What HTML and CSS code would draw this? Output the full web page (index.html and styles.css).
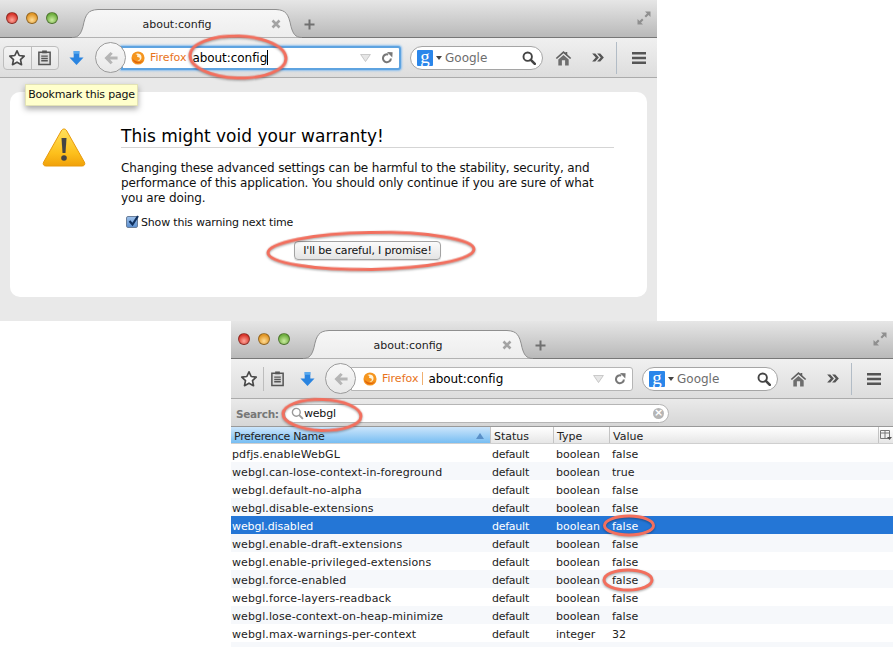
FILE: index.html
```html
<!DOCTYPE html>
<html lang="en">
<head>
<meta charset="utf-8">
<title>about:config</title>
<link rel="stylesheet" href="styles.css">
</head>
<body>
<svg class="defs" width="0" height="0" aria-hidden="true">
  <defs>
    <linearGradient id="tabfill" x1="0" y1="0" x2="0" y2="1"><stop offset="0" stop-color="#f7f7f7"/><stop offset="1" stop-color="#ededed"/></linearGradient>
    <linearGradient id="warn" x1="0" y1="0" x2="0" y2="1"><stop offset="0" stop-color="#ffe15c"/><stop offset=".65" stop-color="#fdc01c"/><stop offset="1" stop-color="#f0a10a"/></linearGradient>
    <symbol id="i-star" viewBox="0 0 18 18"><path d="M9 1.800l2.200 4.700 5 .6-3.700 3.500 1 5.100L9 13.200l-4.500 2.500 1-5.100L1.800 7.100l5-.6z" fill="#f6f6f6" stroke="#4a4a4a" stroke-width="1.700" stroke-linejoin="round"/></symbol>
    <symbol id="i-list" viewBox="0 0 16 18"><path d="M2 3.500h12v13H2z" fill="#dcdcdc" stroke="#555" stroke-width="1.600"/><path d="M5.500 1.500h5v3h-5z" fill="#555"/><path d="M4.500 7.500h7M4.500 10h7M4.500 12.500h7" stroke="#555" stroke-width="1.500"/></symbol>
    <symbol id="i-down" viewBox="0 0 16 17"><path d="M5 1h6v7h4.500L8 16 .5 8H5z" fill="#2a84e0"/><path d="M5 1h6v3H5z" fill="#59a9ee"/></symbol>
    <symbol id="i-back" viewBox="0 0 18 16"><path d="M8.500 1L1.500 8l7 7 2.500-2-3-3.200h8.500V6.200H8L11 3z" fill="#b5b5b5"/></symbol>
    <symbol id="i-fox" viewBox="0 0 16 16"><circle cx="8" cy="8" r="7.500" fill="#f5951e"/><path d="M5 3.500c3-1.500 6.500-.2 7 3 .5 3.500-2.500 5.500-5 4.700 2 0 3.500-1.500 3-3.200-.3-1-2.500-.8-3.200-1.500 1-1.400.5-2.500-1.800-3z" fill="#fff3d8"/><path d="M1.500 8c.3 3.500 3 6 6.500 6 3 0 5-1.500 6-3.500-2 2-5.500 2.500-8 1.300C3.500 10.500 2 9.500 1.500 8z" fill="#e0640c"/></symbol>
    <symbol id="i-drop" viewBox="0 0 12 9"><path d="M.5 .5h11L6 8.500z" fill="#e6e6e6" stroke="#c2c2c2"/></symbol>
    <symbol id="i-reload" viewBox="0 0 14 14"><path d="M11.500 7.500A4.600 4.600 0 1 1 8.500 3" fill="none" stroke="#777" stroke-width="2.400"/><path d="M7 0l6.500 .3-.3 6.200z" fill="#777"/></symbol>
    <symbol id="i-mag" viewBox="0 0 14 14"><circle cx="5.700" cy="5.700" r="4.200" fill="none" stroke="#444" stroke-width="1.900"/><path d="M8.800 8.800l4 4" stroke="#444" stroke-width="2.600" stroke-linecap="round"/></symbol>
    <symbol id="i-home" viewBox="0 0 18 17"><path d="M9 1L.8 8.500l1.200 1L9 3.500l7 6 1.200-1z" fill="#5f5f5f"/><path d="M3.500 10L9 5.200l5.500 4.800v6.500h-3.800V11H7.300v5.500H3.500z" fill="#6e6e6e"/><path d="M9 2.800L13 6.300V2h-2v1.500z" fill="#5f5f5f"/></symbol>
    <symbol id="i-more" viewBox="0 0 13 10"><path d="M0 .5h3.500L7.500 5l-4 4.500H0L4 5zM5.500 .5H9L13 5 9 9.500H5.500L9.500 5z" fill="#555"/></symbol>
    <symbol id="i-menu" viewBox="0 0 16 14"><path d="M1 1h14v2.400H1zM1 5.800h14v2.400H1zM1 10.600h14V13H1z" fill="#555"/></symbol>
    <symbol id="i-full" viewBox="0 0 14 14"><path d="M8 .5h5.500V6L11.500 4 9 6.500 7.500 5 10 2.500zM6 13.500H.5V8l2 2L5 7.500 6.500 9 4 11.500z" fill="#8f8f8f"/></symbol>
    <symbol id="i-x" viewBox="0 0 10 10"><path d="M1.500 1.500l7 7M8.500 1.500l-7 7" stroke="#a3a3a3" stroke-width="2.600"/></symbol>
    <symbol id="i-plus" viewBox="0 0 11 11"><path d="M5.500 .5v10M.5 5.500h10" stroke="#707070" stroke-width="2"/></symbol>
    <symbol id="i-tab" viewBox="0 0 230 29" preserveAspectRatio="none"><path d="M0 28.500c7 0 9-4 11-11C13.500 5 16 1 26 .5H204c10 .5 12.500 4.500 15 17 2 7 4 11 11 11" fill="url(#tabfill)" stroke="#8f8f8f"/></symbol>
  </defs>
</svg>

<main class="desktop">

  <section class="window window-warning">
    <header class="tabbar">
      <div class="lights"><span class="light red"></span><span class="light amber"></span><span class="light green"></span></div>
      <div class="tab">
        <svg class="tab-shape"><use href="#i-tab"/></svg>
        <span class="tab-title">about:config</span>
        <svg class="tab-close"><use href="#i-x"/></svg>
      </div>
      <svg class="tab-plus"><use href="#i-plus"/></svg>
      <svg class="full"><use href="#i-full"/></svg>
    </header>
    <nav class="toolbar">
      <div class="bm-group boxed">
        <span class="bm-cell"><svg class="ic-star"><use href="#i-star"/></svg></span>
        <span class="bm-cell"><svg class="ic-list"><use href="#i-list"/></svg></span>
      </div>
      <svg class="ic-down"><use href="#i-down"/></svg>
      <div class="back"><svg class="ic-back"><use href="#i-back"/></svg></div>
      <div class="urlbar focused">
        <svg class="ic-fox"><use href="#i-fox"/></svg>
        <span class="brand">Firefox</span>
        <span class="url">about:config<i class="caret"></i></span>
        <svg class="ic-drop"><use href="#i-drop"/></svg>
        <svg class="ic-reload"><use href="#i-reload"/></svg>
      </div>
      <div class="searchbar">
        <span class="g-badge">g</span>
        <span class="g-arrow"></span>
        <span class="g-label">Google</span>
        <svg class="ic-mag"><use href="#i-mag"/></svg>
      </div>
      <svg class="ic-home"><use href="#i-home"/></svg>
      <svg class="ic-more"><use href="#i-more"/></svg>
      <span class="tool-sep"></span>
      <svg class="ic-menu"><use href="#i-menu"/></svg>
    </nav>
    <div class="content">
      <article class="card">
        <svg class="warn-icon" viewBox="0 0 44 40"><path d="M22 2c1.200 0 2 .6 2.800 2l17.500 31c1.200 2.200.2 4-2.300 4H4c-2.500 0-3.500-1.800-2.300-4L19.200 4c.8-1.400 1.600-2 2.800-2z" fill="url(#warn)" stroke="#e89a0c"/><path d="M19.500 11h5l-1 15h-3z" fill="#444"/><circle cx="22" cy="31" r="2.800" fill="#444"/></svg>
        <div class="card-body">
          <h1 class="warn-title">This might void your warranty!</h1>
          <p class="warn-text">Changing these advanced settings can be harmful to the stability, security, and<br>performance of this application. You should only continue if you are sure of what<br>you are doing.</p>
          <label class="check"><span class="checkbox"><svg viewBox="0 0 12 12" class="tick"><path d="M2.500 6l3 3.500L11 1" fill="none" stroke="#10305e" stroke-width="2.200"/></svg></span>Show this warning next time</label>
          <div class="btn-row"><button class="promise" type="button">I'll be careful, I promise!</button></div>
        </div>
      </article>
      <div class="tooltip">Bookmark this page</div>
    </div>
  </section>

  <section class="window window-config">
    <header class="tabbar">
      <div class="lights"><span class="light red"></span><span class="light amber"></span><span class="light green"></span></div>
      <div class="tab">
        <svg class="tab-shape"><use href="#i-tab"/></svg>
        <span class="tab-title">about:config</span>
        <svg class="tab-close"><use href="#i-x"/></svg>
      </div>
      <svg class="tab-plus"><use href="#i-plus"/></svg>
      <svg class="full"><use href="#i-full"/></svg>
    </header>
    <nav class="toolbar">
      <div class="bm-group">
        <span class="bm-cell"><svg class="ic-star"><use href="#i-star"/></svg></span>
        <span class="bm-cell"><svg class="ic-list"><use href="#i-list"/></svg></span>
      </div>
      <svg class="ic-down"><use href="#i-down"/></svg>
      <div class="back"><svg class="ic-back"><use href="#i-back"/></svg></div>
      <div class="urlbar">
        <svg class="ic-fox"><use href="#i-fox"/></svg>
        <span class="brand divided">Firefox</span>
        <span class="url">about:config</span>
        <svg class="ic-drop"><use href="#i-drop"/></svg>
        <svg class="ic-reload"><use href="#i-reload"/></svg>
      </div>
      <div class="searchbar">
        <span class="g-badge">g</span>
        <span class="g-arrow"></span>
        <span class="g-label">Google</span>
        <svg class="ic-mag"><use href="#i-mag"/></svg>
      </div>
      <svg class="ic-home"><use href="#i-home"/></svg>
      <svg class="ic-more"><use href="#i-more"/></svg>
      <span class="tool-sep"></span>
      <svg class="ic-menu"><use href="#i-menu"/></svg>
    </nav>
    <div class="filter">
      <span class="filter-label">Search:</span>
      <div class="filter-box">
        <svg class="filter-mag" viewBox="0 0 14 14"><circle cx="5.700" cy="5.700" r="4.200" fill="none" stroke="#9a9a9a" stroke-width="1.500"/><path d="M8.800 8.800l4 4" stroke="#9a9a9a" stroke-width="2"/></svg>
        <span class="filter-text">webgl</span>
        <span class="filter-clear">×</span>
      </div>
    </div>
    <div class="prefs">
      <div class="row head">
        <span class="h-cell sorted">Preference Name<i class="sort"></i></span>
        <span class="h-cell">Status</span>
        <span class="h-cell">Type</span>
        <span class="h-cell">Value</span>
        <span class="h-picker"><svg viewBox="0 0 12 12"><path d="M.5 1.500h9v8h-9zM.5 4h9M5 1.500v8" fill="none" stroke="#777"/><path d="M7 8h5l-2.500 3z" fill="#555"/></svg></span>
      </div>
      <div class="row"><span class="c-name">pdfjs.enableWebGL</span><span class="c-status">default</span><span>boolean</span><span>false</span></div>
      <div class="row alt"><span class="c-name">webgl.can-lose-context-in-foreground</span><span class="c-status">default</span><span>boolean</span><span>true</span></div>
      <div class="row"><span class="c-name">webgl.default-no-alpha</span><span class="c-status">default</span><span>boolean</span><span>false</span></div>
      <div class="row alt"><span class="c-name">webgl.disable-extensions</span><span class="c-status">default</span><span>boolean</span><span>false</span></div>
      <div class="row selected"><span class="c-name">webgl.disabled</span><span class="c-status">default</span><span>boolean</span><span>false</span></div>
      <div class="row alt"><span class="c-name">webgl.enable-draft-extensions</span><span class="c-status">default</span><span>boolean</span><span>false</span></div>
      <div class="row"><span class="c-name">webgl.enable-privileged-extensions</span><span class="c-status">default</span><span>boolean</span><span>false</span></div>
      <div class="row alt"><span class="c-name">webgl.force-enabled</span><span class="c-status">default</span><span>boolean</span><span>false</span></div>
      <div class="row"><span class="c-name">webgl.force-layers-readback</span><span class="c-status">default</span><span>boolean</span><span>false</span></div>
      <div class="row alt"><span class="c-name">webgl.lose-context-on-heap-minimize</span><span class="c-status">default</span><span>boolean</span><span>false</span></div>
      <div class="row"><span class="c-name">webgl.max-warnings-per-context</span><span class="c-status">default</span><span>integer</span><span>32</span></div>
      <div class="row alt"></div>
    </div>
  </section>

  <svg class="marks" viewBox="0 0 893 647" aria-hidden="true">
    <ellipse cx="238" cy="57" rx="48" ry="21" transform="rotate(2 238 57)"/>
    <ellipse cx="371" cy="251" rx="103" ry="18.500" transform="rotate(-1 371 251)"/>
    <ellipse cx="322" cy="415" rx="39" ry="15.500" transform="rotate(2 322 415)"/>
    <ellipse cx="629" cy="525.500" rx="24.500" ry="9.500"/>
    <ellipse cx="628" cy="580" rx="24" ry="10"/>
  </svg>
</main>
</body>
</html>
```

FILE: styles.css
```css
* { box-sizing: border-box; }
html, body { margin: 0; padding: 0; background: #fff; }
body { font-family: "DejaVu Sans", sans-serif; color: #111; overflow: hidden; }
.defs { position: absolute; }
.desktop { position: relative; width: 893px; height: 647px; overflow: hidden; }

.window { position: absolute; display: flex; flex-direction: column; overflow: hidden; }
.window-warning { left: 0; top: 0; width: 657px; height: 321px; }
.window-config { left: 231px; top: 321px; width: 662px; height: 326px; }

.tabbar { flex: none; height: 38px; position: relative; display: flex; align-items: flex-start;
  background: linear-gradient(#e6e6e6, #b9b9b9); border-bottom: 1px solid #777; }
.lights { display: flex; gap: 8px; padding: 12px 0 0 6px; width: 72px; flex: none; }
.light { width: 12px; height: 12px; border-radius: 50%; border: 1px solid rgba(0,0,0,.35); }
.red { background: radial-gradient(circle at 50% 70%, #ffa69a, #d8362c 70%); }
.amber { background: radial-gradient(circle at 50% 70%, #ffdd96, #e09526 70%); }
.green { background: radial-gradient(circle at 50% 70%, #cbeca0, #6eae3f 70%); }
.tab { position: relative; width: 230px; height: 29px; margin-top: 9px; flex: none;
  display: flex; align-items: center; justify-content: center; margin-bottom: -1px; }
.tab-shape { position: absolute; left: 0; top: 0; width: 100%; height: 100%; }
.tab-title { position: relative; font-size: 11px; color: #222; left: -10px; top: 1px; }
.tab-close { position: absolute; right: 21px; top: 10px; width: 10px; height: 10px; }
.tab-plus { width: 11px; height: 11px; margin: 19px 0 0 2px; flex: none; }
.full { position: absolute; right: 6px; top: 11px; width: 14px; height: 14px; }

.toolbar { flex: none; height: 40px; display: flex; align-items: center; padding: 0 10px 0 3px;
  background: linear-gradient(#f0f0f0, #dddddd); border-bottom: 1px solid #ababab; }
.bm-group { display: flex; width: 56px; height: 24px; flex: none; }
.bm-group.boxed { border: 1px solid #bdbdbd; border-radius: 4px; background: linear-gradient(#f4f4f4, #e6e6e6); }
.bm-cell { flex: 1; display: flex; align-items: center; justify-content: center; }
.bm-cell + .bm-cell { border-left: 1px solid #bdbdbd; }
.ic-star { width: 18px; height: 18px; }
.ic-list { width: 15px; height: 17px; }
.ic-down { width: 15px; height: 16px; margin: 0 0 0 10px; flex: none; }
.back { width: 31px; height: 31px; flex: none; margin: 0 -5px 0 11px; border-radius: 50%; position: relative; z-index: 2;
  border: 1px solid #9b9b9b; background: linear-gradient(#f8f8f8, #e8e8e8); display: flex; align-items: center; justify-content: center; }
.ic-back { width: 16px; height: 14px; }

.urlbar { flex: 1; min-width: 0; height: 24px; background: #fff; display: flex; align-items: center;
  border: 1px solid #b5b5b5; border-radius: 0 3px 3px 0; padding: 0 6px 0 9px; font-size: 12px; }
.urlbar.focused { border: 2px solid #5ea3e0; padding-left: 8px; box-shadow: 0 0 2px 1px #8fc0ee; }
.ic-fox { width: 14px; height: 14px; flex: none; margin-right: 5px; }
.brand { color: #e8731a; font-size: 11px; padding-right: 4px; white-space: nowrap; }
.brand.divided { border-right: 1px solid #f0b070; }
.url { margin-left: 2px; flex: 1; color: #000; font-size: 12px; white-space: nowrap; letter-spacing: -.05px; }
.caret { display: inline-block; width: 1px; height: 15px; background: #000; vertical-align: -3px; }
.ic-drop { width: 11px; height: 8px; margin-right: 10px; flex: none; }
.ic-reload { width: 12px; height: 12px; flex: none; }

.searchbar { width: 133px; height: 24px; flex: none; margin-left: 9px; border: 1px solid #a5a5a5; border-radius: 12px;
  background: #fff; display: flex; align-items: center; padding: 0 6px; }
.g-badge { width: 16px; height: 16px; background: #2a86ea; color: #fff; font: 19px/13px "Liberation Serif", serif;
  text-align: center; border-radius: 1px; flex: none; }
.g-arrow { width: 0; height: 0; border: 3px solid transparent; border-top: 4px solid #444; border-bottom: 0; margin: 0 3px; flex: none; }
.g-label { flex: 1; color: #6d6d6d; font-size: 12px; }
.ic-mag { width: 14px; height: 14px; flex: none; }

.ic-home { width: 17px; height: 16px; flex: none; margin-left: 12px; }
.ic-more { width: 12px; height: 9px; flex: none; margin-left: 20px; }
.tool-sep { width: 1px; height: 32px; background: #b2bcc6; flex: none; margin: 0 14px 0 12px; }
.ic-menu { width: 16px; height: 14px; flex: none; }

.window-config .lights { padding-left: 7px; }
.window-config .toolbar { padding: 0 11px 0 4px; }
.window-config .ic-down { margin-left: 9px; }
.window-config .back { margin-left: 10px; }
.window-config .urlbar { padding-left: 11px; }
.window-config .url { margin-left: 5px; }
.window-config .searchbar { width: 136px; }

.content { flex: 1; position: relative; background: #e9e9e9; padding: 14px 10px 24px; }
.card { background: #fff; border-radius: 10px; height: 205px; display: flex; }
.warn-icon { width: 44px; height: 40px; flex: none; margin: 35px 0 0 32px; }
.card-body { flex: 1; padding: 34px 33px 0 35px; }
.warn-title { margin: 0 0 13px; font-size: 17px; line-height: 21px; font-weight: 400; color: #000; border-bottom: 1px solid #d5d5d5; height: 22px; }
.warn-text { margin: 0; font-size: 12px; line-height: 15px; color: #111; white-space: nowrap; letter-spacing: -.14px; }
.check { display: flex; align-items: center; font-size: 11px; margin: 9px 0 0 5px; height: 14px; color: #111; letter-spacing: -.18px; }
.checkbox { width: 12px; height: 12px; background: linear-gradient(#9cc0ea, #5d90d0); border: 1px solid #6a7f9b; border-radius: 2px; margin-right: 3px; display: block; }
.tick { display: block; width: 12px; height: 12px; margin: -2px 0 0 0; }
.btn-row { display: flex; justify-content: center; margin: 12px 0 0 0; }
.promise { width: 147px; height: 19px; padding: 0; font: 11px "DejaVu Sans", sans-serif; letter-spacing: -.18px; color: #111; border: 1px solid #a3a3a3; border-radius: 4px;
  background: linear-gradient(#fbfbfb, #e4e4e4); box-shadow: 0 1px 1px rgba(0,0,0,.15); }
.tooltip { position: absolute; left: 25px; top: 6px; width: 113px; height: 22px; background: #ffffcc; border: 1px solid #e2e2b5;
  box-shadow: 0 3px 6px rgba(0,0,0,.35); font-size: 11px; letter-spacing: -.2px; line-height: 20px; text-align: center; color: #111; white-space: nowrap; }

.filter { flex: none; height: 28px; display: flex; align-items: center; padding: 2px 0 0 5px;
  background: linear-gradient(#eaeaea, #d6d6d6); border-bottom: 1px solid #999; }
.filter-label { font-size: 10.5px; letter-spacing: -.3px; font-weight: 700; color: #777; width: 48px; flex: none; }
.filter-box { width: 385px; height: 19px; background: #fff; border: 1px solid #b5b5b5; border-radius: 10px; display: flex; align-items: center; padding: 0 4px 0 6px; }
.filter-mag { width: 13px; height: 13px; flex: none; }
.filter-text { flex: 1; font-size: 11px; letter-spacing: -.2px; color: #111; }
.filter-clear { width: 11px; height: 11px; border-radius: 50%; background: #b5b5b5; color: #fff; font-size: 11px; line-height: 10px; text-align: center; font-weight: 700; }

.prefs { flex: 1; background: #fff; overflow: hidden; }
.row { height: 18px; display: grid; grid-template-columns: 260px 64px 56px 1fr; align-items: center; padding: 2px 0 0 1px; font-size: 11px; color: #222; white-space: nowrap; }
.c-name { letter-spacing: .11px; }
.c-status { letter-spacing: -.25px; }
.row.alt { background: #f6f8fb; }
.row.selected { background: #2476d6; color: #fff; }
.row.selected .c-name { letter-spacing: -.1px; }
.row.head { height: 17px; grid-template-columns: 259px 63px 56px 1fr 15px; padding: 0; background: linear-gradient(#fff, #e6e6e6); border-bottom: 1px solid #cfcfcf; }
.h-cell { height: 100%; display: flex; align-items: center; padding: 2px 0 0 3px; border-left: 1px solid #c4c4c4; color: #222; position: relative; }
.h-cell.sorted { padding-left: 3px; border-left: 0; letter-spacing: -.3px; background: linear-gradient(#cce5fb, #77bdf2); }
.sort { position: absolute; right: 6px; top: 6px; width: 0; height: 0; border: 4px solid transparent; border-bottom: 6px solid #5a90c8; border-top: 0; }
.h-picker { display: flex; align-items: center; justify-content: center; border-left: 1px solid #c4c4c4; height: 100%; }
.h-picker svg { width: 12px; height: 12px; }

.marks { position: absolute; left: 0; top: 0; width: 893px; height: 647px; pointer-events: none; overflow: visible; }
.marks ellipse { fill: none; stroke: #f26f5e; stroke-width: 3; filter: drop-shadow(0 1px 1px rgba(0,0,0,.35)); }
```
